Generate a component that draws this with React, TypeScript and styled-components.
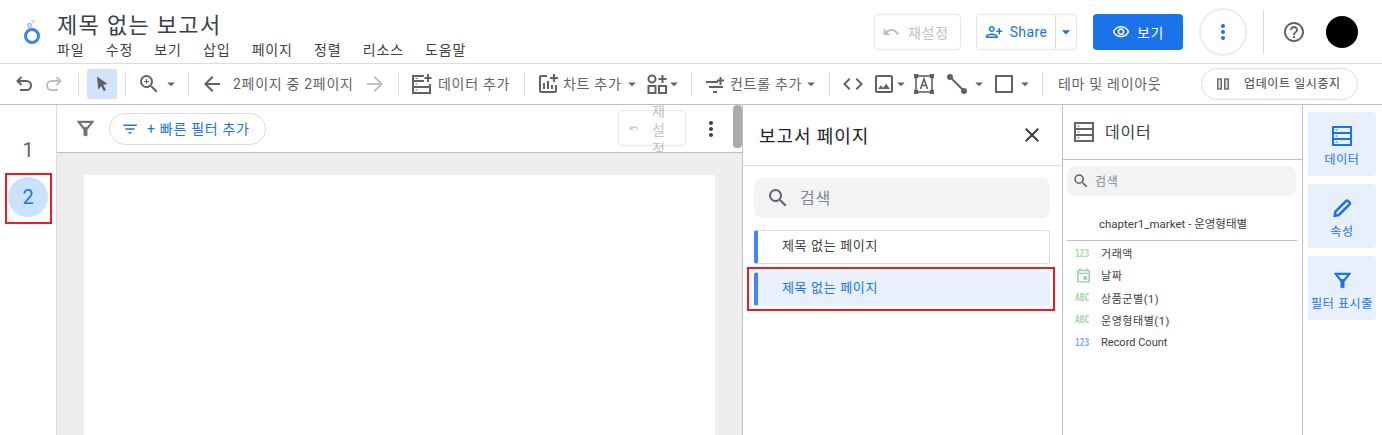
import styled, { createGlobalStyle } from "styled-components";
import {
  MdUndo,
  MdOutlineZoomIn,
  MdArrowBack,
  MdArrowForward,
  MdCode,
  MdOutlineImage,
  MdHelpOutline,
  MdMoreVert,
  MdOutlineVisibility,
  MdPersonAddAlt,
  MdArrowDropDown,
  MdClose,
  MdSearch,
  MdFilterList,
  MdOutlineAddchart,
  MdOutlineEvent,
} from "react-icons/md";

const GlobalStyle = createGlobalStyle`
  html, body {
    margin: 0;
    padding: 0;
    background: #fff;
    font-family: Roboto, "Noto Sans CJK KR", sans-serif;
    color: #3c4043;
  }
  * { box-sizing: border-box; }
  svg { flex: none; }
`;

const Page = styled.div`
  width: 1382px;
  height: 435px;
  overflow: hidden;
  position: relative;
  display: flex;
  flex-direction: column;
`;

/* top header */
const Header = styled.header`
  height: 64px;
  flex: none;
  display: flex;
  border-bottom: 1px solid #dadce0;
  padding-left: 21px;
`;

const LogoBox = styled.div`
  width: 36px;
  padding-top: 17px;
`;

const TitleBlock = styled.div`
  padding-top: 11px;
`;

const Title = styled.div`
  font-size: 22px;
  line-height: 29px;
  letter-spacing: 0.06em;
  color: #3c4043;
`;

const MenuBar = styled.nav`
  display: flex;
  gap: 21.2px;
  font-size: 14px;
  letter-spacing: 0.85px;
  line-height: 20px;
  color: #3c4043;
`;

const HeaderRight = styled.div`
  margin-left: auto;
  display: flex;
  align-items: center;
  padding: 0 24px 0 0;
  height: 63px;
`;

const OutlineButton = styled.div<{ $w: number; $muted?: boolean; $gap: number }>`
  width: ${(p) => p.$w}px;
  height: 36px;
  display: flex;
  align-items: center;
  border: 1px solid #e3e5e8;
  border-radius: 4px;
  font-size: 14px;
  color: ${(p) => (p.$muted ? "#bdc1c6" : "#1a73e8")};
  margin-right: ${(p) => p.$gap}px;
`;

const ResetInner = styled.div`
  display: flex;
  align-items: center;
  gap: 8px;
  padding-left: 7px;
  letter-spacing: 0.05em;
`;

const ShareMain = styled.div`
  width: 80px;
  height: 100%;
  display: flex;
  align-items: center;
  justify-content: center;
  gap: 7px;
  letter-spacing: 0.4px;
  border-right: 1px solid #dadce0;
`;

const ShareCaret = styled.div`
  flex: 1;
  display: flex;
  justify-content: center;
`;

const ViewButton = styled.div`
  width: 90px;
  height: 36px;
  background: #1a73e8;
  border-radius: 4px;
  color: #fff;
  display: flex;
  align-items: center;
  justify-content: center;
  gap: 7px;
  font-size: 14px;
  letter-spacing: 0.05em;
  margin-right: 16px;
`;

const RoundMore = styled.div`
  width: 48px;
  height: 48px;
  border: 2px solid #eceded;
  border-radius: 50%;
  color: #1a73e8;
  display: flex;
  align-items: center;
  justify-content: center;
  margin-right: 16px;
`;

const HeaderRule = styled.div`
  width: 1px;
  height: 44px;
  background: #dadce0;
  margin-right: 18px;
`;

const Avatar = styled.div`
  width: 32px;
  height: 32px;
  border-radius: 50%;
  background: #000;
  margin-left: 20px;
`;

/* toolbar */
const Toolbar = styled.div`
  height: 41px;
  flex: none;
  display: flex;
  align-items: center;
  padding-left: 9px;
  border-bottom: 1px solid #bdc1c6;
  color: #5f6368;
  font-size: 14px;
`;

const Tool = styled.div<{ $w?: number; $ml?: number; $active?: boolean; $dim?: boolean }>`
  width: ${(p) => p.$w ?? 30}px;
  height: 30px;
  flex: none;
  margin-left: ${(p) => p.$ml ?? 0}px;
  display: flex;
  align-items: center;
  justify-content: center;
  border-radius: 2px;
  background: ${(p) => (p.$active ? "#d2e3fc" : "transparent")};
  color: ${(p) => (p.$dim ? "#bdc1c6" : "#5f6368")};
`;

const Caret = styled.div<{ $w?: number }>`
  width: ${(p) => p.$w ?? 14}px;
  height: 30px;
  flex: none;
  display: flex;
  align-items: center;
  justify-content: center;
  color: #5f6368;
`;

const Rule = styled.div<{ $l?: number; $r?: number }>`
  width: 1px;
  height: 24px;
  flex: none;
  background: #dadce0;
  margin: 0 ${(p) => p.$r ?? 8}px 0 ${(p) => p.$l ?? 8}px;
`;

const ToolLabel = styled.span<{ $w: number; $pl?: number }>`
  width: ${(p) => p.$w}px;
  flex: none;
  white-space: nowrap;
  color: #5f6368;
  font-size: 14px;
  letter-spacing: 0.05em;
  padding: 0 0 3px ${(p) => p.$pl ?? 0}px;
`;

const PauseButton = styled.div`
  width: 157px;
  height: 32px;
  flex: none;
  margin-left: 40px;
  border: 1px solid #dadce0;
  border-radius: 16px;
  display: flex;
  align-items: center;
  gap: 15px;
  padding-left: 15px;
  font-size: 12px;
  color: #3c4043;
`;

const PauseLabel = styled.span`
  letter-spacing: 0.05em;
  padding-bottom: 3px;
`;

/* main area */
const Main = styled.div`
  flex: 1;
  min-height: 0;
  display: flex;
`;

const Rail = styled.div`
  width: 57px;
  flex: none;
  border-right: 1px solid #dadce0;
  display: flex;
  flex-direction: column;
  align-items: center;
  padding: 25px 0 0 0;
  gap: 7px;
`;

const RailNum = styled.div<{ $active?: boolean }>`
  width: 40px;
  height: 40px;
  border-radius: 50%;
  display: flex;
  align-items: center;
  justify-content: center;
  font-size: 20px;
  background: ${(p) => (p.$active ? "#cbe2fc" : "transparent")};
  color: ${(p) => (p.$active ? "#1a73e8" : "#5f6368")};
`;

const Canvas = styled.div`
  width: 685px;
  flex: none;
  display: flex;
  flex-direction: column;
  position: relative;
  background: #eeeeee;
`;

const FilterBar = styled.div`
  height: 48px;
  flex: none;
  background: #fff;
  border-bottom: 1px solid #bdc1c6;
  display: flex;
  align-items: center;
  padding-left: 20px;
  overflow: hidden;
  color: #6f7276;
`;

const QuickFilter = styled.div`
  width: 157px;
  height: 32px;
  margin-left: 15px;
  border: 1px solid #dadce0;
  border-radius: 16px;
  display: flex;
  align-items: center;
  gap: 8px;
  padding-left: 11px;
  color: #1a73e8;
  font-size: 14px;
  letter-spacing: 0.05em;
`;

const QuickLabel = styled.span`
  padding-bottom: 2px;
`;

const SmallReset = styled.div`
  width: 68px;
  height: 36px;
  margin-left: 352px;
  margin-top: -1px;
  border: 1px solid #e3e5e8;
  border-radius: 4px;
  position: relative;
  display: flex;
  align-items: center;
  padding-left: 10px;
  color: #bdc1c6;
`;

const SmallResetText = styled.span`
  position: absolute;
  left: 33px;
  top: -9px;
  width: 14px;
  font-size: 14px;
  line-height: 19px;
  color: #bdc1c6;
  word-break: break-all;
`;

const FilterMore = styled.div`
  margin-left: 13px;
  display: flex;
  color: #3c4043;
`;

const Scrollbar = styled.div`
  position: absolute;
  top: 0;
  right: 0;
  width: 9px;
  height: 43px;
  background: #ababab;
  border-radius: 4px;
`;

const CanvasBody = styled.div`
  flex: 1;
  padding: 22px 27px 0 27px;
`;

const Sheet = styled.div`
  width: 631px;
  height: 100%;
  background: #fff;
`;

const PagesPanel = styled.div`
  width: 321px;
  flex: none;
  border-left: 1px solid #bdc1c6;
  border-right: 1px solid #bdc1c6;
  display: flex;
  flex-direction: column;
`;

const PagesHead = styled.div`
  height: 61px;
  flex: none;
  border-bottom: 1px solid #dadce0;
  display: flex;
  align-items: center;
  justify-content: space-between;
  padding: 0 18px 0 16px;
  font-size: 18px;
  letter-spacing: 0.05em;
  color: #202124;
`;

const PagesBody = styled.div`
  padding: 12px 12px 12px 11px;
  display: flex;
  flex-direction: column;
`;

const SearchBox = styled.div<{ $small?: boolean }>`
  height: ${(p) => (p.$small ? 30 : 40)}px;
  margin-right: ${(p) => (p.$small ? 1 : 0)}px;
  background: #f1f3f4;
  border-radius: 8px;
  display: flex;
  align-items: center;
  gap: ${(p) => (p.$small ? 5 : 10)}px;
  padding-left: ${(p) => (p.$small ? 5 : 12)}px;
  font-size: ${(p) => (p.$small ? 12 : 16)}px;
  letter-spacing: 0.05em;
  color: #80868b;
  flex: none;
`;

const SearchHint = styled.span`
  padding-bottom: 2px;
`;

const PageItem = styled.div<{ $active?: boolean }>`
  height: 34px;
  margin-top: ${(p) => (p.$active ? 8 : 12)}px;
  border: 1px solid ${(p) => (p.$active ? "#e8f0fe" : "#dadce0")};
  border-left: 4px solid #4285f4;
  border-radius: 3px;
  background: ${(p) => (p.$active ? "#e8f0fe" : "#fff")};
  color: ${(p) => (p.$active ? "#1a73e8" : "#3c4043")};
  display: flex;
  align-items: center;
  padding: 0 0 5px 24px;
  font-size: 13px;
  letter-spacing: 0.05em;
`;

const DataPanel = styled.div`
  width: 240px;
  flex: none;
  border-right: 1px solid #bdc1c6;
  display: flex;
  flex-direction: column;
`;

const DataHead = styled.div`
  height: 55px;
  flex: none;
  border-bottom: 1px solid #bdc1c6;
  display: flex;
  align-items: center;
  gap: 11px;
  padding-left: 11px;
  font-size: 16px;
  letter-spacing: 0.05em;
  color: #3c4043;
`;

const DataTitle = styled.span`
  padding-bottom: 2px;
`;

const DataBody = styled.div`
  padding: 6px 5px 0 4px;
`;

const SourceName = styled.div`
  height: 45px;
  padding: 19px 0 0 32px;
  border-bottom: 1px solid #bdc1c6;
  font-size: 11.5px;
  line-height: 18px;
  color: #3c4043;
`;

const FieldList = styled.div`
  padding: 1px 0 0 8px;
`;

const FieldRow = styled.div`
  height: 22.25px;
  display: flex;
  align-items: center;
  font-size: 11px;
  color: #3c4043;
`;

const FieldSlot = styled.span`
  width: 26px;
  flex: none;
  display: flex;
  color: #93cf9e;
`;

const FieldName = styled.span<{ $latin?: boolean }>`
  letter-spacing: ${(p) => (p.$latin ? "0" : "0.05em")};
`;

const TypeMark = styled.span<{ $blue?: boolean }>`
  display: inline-block;
  font-family: "DejaVu Sans Mono", monospace;
  font-size: 11px;
  line-height: 11px;
  font-weight: 700;
  transform: scaleX(0.72);
  transform-origin: left center;
  color: ${(p) => (p.$blue ? "#7baaf7" : "#a8d5a9")};
`;

const SideTabs = styled.div`
  flex: 1;
  padding: 7px 6px 0 5px;
  display: flex;
  flex-direction: column;
  gap: 8px;
`;

const SideTab = styled.div`
  height: 64px;
  padding-top: 14px;
  background: #e8f0fe;
  border-radius: 4px;
  display: flex;
  flex-direction: column;
  align-items: center;
  gap: 4px;
  color: #1a73e8;
  font-size: 12px;
  letter-spacing: 0.05em;
  white-space: nowrap;
`;

const TabIcon = styled.div`
  height: 20px;
  display: flex;
  align-items: center;
  justify-content: center;
`;

const Annotation = styled.div<{ $x: number; $y: number; $w: number; $h: number }>`
  position: absolute;
  left: ${(p) => p.$x}px;
  top: ${(p) => p.$y}px;
  width: ${(p) => p.$w}px;
  height: ${(p) => p.$h}px;
  border: 2px solid #ed1c24;
`;

function LogoIcon() {
  return (
    <svg width="20" height="28" viewBox="0 0 20 28" fill="none">
      <circle cx="11" cy="19" r="6.500" stroke="#3d84ec" strokeWidth="3" />
      <circle cx="8.500" cy="8.500" r="1.800" stroke="#7fb0f5" strokeWidth="1.200" />
      <circle cx="12" cy="4.500" r="1.200" stroke="#a6c8f8" strokeWidth="1" />
    </svg>
  );
}

function HookArrow({ flip }: { flip?: boolean }) {
  return (
    <svg width="18" height="16" viewBox="0 0 18 16" fill="none" stroke="currentColor" strokeWidth="2">
      <g transform={flip ? "translate(18 0) scale(-1 1)" : undefined}>
        <path d="M6.500 1L2.500 5l4 4" />
        <path d="M2.500 5h9a4.500 4.500 0 0 1 0 9H5" />
      </g>
    </svg>
  );
}

function DataIcon({ color = "currentColor" }: { color?: string }) {
  return (
    <svg width="20" height="20" viewBox="0 0 20 20" fill="none" stroke={color} strokeWidth="2">
      <rect x="1" y="1" width="18" height="18" />
      <path d="M1 7h18M1 13h18" />
      <path d="M3.500 4h2M3.500 10h2M3.500 16h2" strokeWidth="1.200" />
    </svg>
  );
}

function AddDataIcon() {
  return (
    <svg width="20" height="20" viewBox="0 0 20 20" fill="none" stroke="currentColor" strokeWidth="2">
      <path d="M12 2H1v17h17v-9" />
      <path d="M1 7h11M1 13h17" />
      <path d="M3.500 4.500h2M3.500 10h2M3.500 16h2" strokeWidth="1.200" />
      <path d="M16 0v8M12.500 4h7" />
    </svg>
  );
}

function ShapesIcon() {
  return (
    <svg width="20" height="20" viewBox="0 0 20 20" fill="none" stroke="currentColor" strokeWidth="2">
      <circle cx="5" cy="5" r="3.500" />
      <rect x="1.500" y="12" width="7" height="7" />
      <rect x="12" y="12" width="7" height="7" />
      <path d="M15.500 1v8M11.500 5h8" />
    </svg>
  );
}

function ControlIcon() {
  return (
    <svg width="20" height="20" viewBox="0 0 20 20" fill="none" stroke="currentColor" strokeWidth="2">
      <path d="M1 8h12M4 13h14M8 18h4" />
      <path d="M15.500 3v8M12 6.500h7" />
    </svg>
  );
}

function TextBoxIcon() {
  return (
    <svg width="20" height="20" viewBox="0 0 20 20" fill="none" stroke="currentColor" strokeWidth="1.600">
      <rect x="2" y="2" width="16" height="16" />
      <path d="M6.500 15L10 5l3.500 10M7.800 11.500h4.400" />
      <path d="M0.500 0.500h3v3h-3zM16.500 0.500h3v3h-3zM0.500 16.500h3v3h-3zM16.500 16.500h3v3h-3z" fill="currentColor" />
    </svg>
  );
}

function LineIcon() {
  return (
    <svg width="20" height="20" viewBox="0 0 20 20" fill="none" stroke="currentColor" strokeWidth="2">
      <path d="M3 3l14 14" />
      <circle cx="3" cy="3" r="2" fill="currentColor" />
      <circle cx="17" cy="17" r="2" fill="currentColor" />
    </svg>
  );
}

function SquareIcon() {
  return (
    <svg width="20" height="20" viewBox="0 0 20 20" fill="none" stroke="currentColor" strokeWidth="2">
      <rect x="2" y="2" width="16" height="16" />
    </svg>
  );
}

function PointerIcon() {
  return (
    <svg width="14" height="16" viewBox="0 0 14 16" fill="currentColor">
      <path d="M2 0.500l10.500 7.500-4.200 1 2.700 5-2.200 1.200-2.600-5-3 3.300z" />
    </svg>
  );
}

function PauseIcon() {
  return (
    <svg width="12" height="12" viewBox="0 0 12 12" fill="#dadce0" stroke="#5f6368" strokeWidth="1.300">
      <rect x="0.700" y="1" width="3.600" height="10" />
      <rect x="7.700" y="1" width="3.600" height="10" />
    </svg>
  );
}

function FunnelIcon() {
  return (
    <svg width="17" height="17" viewBox="0 0 20 20" fill="none" stroke="currentColor" strokeWidth="2.600">
      <path d="M2 2.200h16l-6 7.600H8z" />
      <path d="M8 9h4v9.500H8z" fill="currentColor" strokeWidth="0.600" />
    </svg>
  );
}

function PencilIcon() {
  return (
    <svg width="20" height="20" viewBox="0 0 22 22" fill="none" stroke="currentColor" strokeWidth="2.800">
      <path d="M3 19.500l0.800-4.500L15.500 3.300a1.500 1.500 0 0 1 2.100 0l1.600 1.600a1.500 1.500 0 0 1 0 2.100L7.500 18.700z" />
    </svg>
  );
}

const menus = ["파일", "수정", "보기", "삽입", "페이지", "정렬", "리소스", "도움말"];

export default function App() {
  return (
    <Page>
      <GlobalStyle />
      <Header>
        <LogoBox>
          <LogoIcon />
        </LogoBox>
        <TitleBlock>
          <Title>제목 없는 보고서</Title>
          <MenuBar>
            {menus.map((m) => (
              <span key={m}>{m}</span>
            ))}
          </MenuBar>
        </TitleBlock>
        <HeaderRight>
          <OutlineButton $w={87} $gap={15} $muted>
            <ResetInner>
              <MdUndo size={18} />
              재설정
            </ResetInner>
          </OutlineButton>
          <OutlineButton $w={101} $gap={16}>
            <ShareMain>
              <MdPersonAddAlt size={18} />
              Share
            </ShareMain>
            <ShareCaret>
              <MdArrowDropDown size={20} />
            </ShareCaret>
          </OutlineButton>
          <ViewButton>
            <MdOutlineVisibility size={18} />
            보기
          </ViewButton>
          <RoundMore>
            <MdMoreVert size={24} />
          </RoundMore>
          <HeaderRule />
          <Tool $w={24}>
            <MdHelpOutline size={24} />
          </Tool>
          <Avatar />
        </HeaderRight>
      </Header>

      <Toolbar>
        <Tool>
          <HookArrow />
        </Tool>
        <Tool $dim>
          <HookArrow flip />
        </Tool>
        <Rule $l={9} />
        <Tool $active>
          <PointerIcon />
        </Tool>
        <Rule />
        <Tool>
          <MdOutlineZoomIn size={24} />
        </Tool>
        <Caret>
          <MdArrowDropDown size={18} />
        </Caret>
        <Rule $l={10} />
        <Tool>
          <MdArrowBack size={24} />
        </Tool>
        <ToolLabel $w={133} $pl={6}>
          2페이지 중 2페이지
        </ToolLabel>
        <Tool $dim>
          <MdArrowForward size={24} />
        </Tool>
        <Rule />
        <Tool>
          <AddDataIcon />
        </Tool>
        <ToolLabel $w={78} $pl={1}>
          데이터 추가
        </ToolLabel>
        <Rule $l={9} />
        <Tool>
          <MdOutlineAddchart size={24} />
        </Tool>
        <ToolLabel $w={62}>차트 추가</ToolLabel>
        <Caret>
          <MdArrowDropDown size={18} />
        </Caret>
        <Tool $w={26} $ml={5}>
          <ShapesIcon />
        </Tool>
        <Caret $w={8}>
          <MdArrowDropDown size={18} />
        </Caret>
        <Rule $l={13} />
        <Tool>
          <ControlIcon />
        </Tool>
        <ToolLabel $w={74}>컨트롤 추가</ToolLabel>
        <Caret>
          <MdArrowDropDown size={18} />
        </Caret>
        <Rule $l={11} />
        <Tool>
          <MdCode size={24} />
        </Tool>
        <Tool $ml={1}>
          <MdOutlineImage size={24} />
        </Tool>
        <Caret $w={4}>
          <MdArrowDropDown size={18} />
        </Caret>
        <Tool $w={28} $ml={7}>
          <TextBoxIcon />
        </Tool>
        <Tool $w={32} $ml={3}>
          <LineIcon />
        </Tool>
        <Caret $w={12}>
          <MdArrowDropDown size={18} />
        </Caret>
        <Tool $w={28} $ml={5}>
          <SquareIcon />
        </Tool>
        <Caret>
          <MdArrowDropDown size={18} />
        </Caret>
        <Rule $l={10} $r={15} />
        <ToolLabel $w={103}>테마 및 레이아웃</ToolLabel>
        <PauseButton>
          <PauseIcon />
          <PauseLabel>업데이트 일시중지</PauseLabel>
        </PauseButton>
      </Toolbar>

      <Main>
        <Rail>
          <RailNum>1</RailNum>
          <RailNum $active>2</RailNum>
        </Rail>
        <Canvas>
          <FilterBar>
            <FunnelIcon />
            <QuickFilter>
              <MdFilterList size={18} />
              <QuickLabel>+ 빠른 필터 추가</QuickLabel>
            </QuickFilter>
            <SmallReset>
              <MdUndo size={10} />
              <SmallResetText>재설정</SmallResetText>
            </SmallReset>
            <FilterMore>
              <MdMoreVert size={24} />
            </FilterMore>
          </FilterBar>
          <Scrollbar />
          <CanvasBody>
            <Sheet />
          </CanvasBody>
        </Canvas>
        <PagesPanel>
          <PagesHead>
            보고서 페이지
            <MdClose size={24} color="#3c4043" />
          </PagesHead>
          <PagesBody>
            <SearchBox>
              <MdSearch size={24} color="#5f6368" />
              <SearchHint>검색</SearchHint>
            </SearchBox>
            <PageItem>제목 없는 페이지</PageItem>
            <PageItem $active>제목 없는 페이지</PageItem>
          </PagesBody>
        </PagesPanel>
        <DataPanel>
          <DataHead>
            <DataIcon color="#5f6368" />
            <DataTitle>데이터</DataTitle>
          </DataHead>
          <DataBody>
            <SearchBox $small>
              <MdSearch size={18} color="#5f6368" />
              <SearchHint>검색</SearchHint>
            </SearchBox>
            <SourceName>chapter1_market - 운영형태별</SourceName>
            <FieldList>
              <FieldRow>
                <FieldSlot>
                  <TypeMark>123</TypeMark>
                </FieldSlot>
                <FieldName>거래액</FieldName>
              </FieldRow>
              <FieldRow>
                <FieldSlot>
                  <MdOutlineEvent size={17} />
                </FieldSlot>
                <FieldName>날짜</FieldName>
              </FieldRow>
              <FieldRow>
                <FieldSlot>
                  <TypeMark>ABC</TypeMark>
                </FieldSlot>
                <FieldName>상품군별(1)</FieldName>
              </FieldRow>
              <FieldRow>
                <FieldSlot>
                  <TypeMark>ABC</TypeMark>
                </FieldSlot>
                <FieldName>운영형태별(1)</FieldName>
              </FieldRow>
              <FieldRow>
                <FieldSlot>
                  <TypeMark $blue>123</TypeMark>
                </FieldSlot>
                <FieldName $latin>Record Count</FieldName>
              </FieldRow>
            </FieldList>
          </DataBody>
        </DataPanel>
        <SideTabs>
          <SideTab>
            <TabIcon>
              <DataIcon />
            </TabIcon>
            데이터
          </SideTab>
          <SideTab>
            <TabIcon>
              <PencilIcon />
            </TabIcon>
            속성
          </SideTab>
          <SideTab>
            <TabIcon>
              <FunnelIcon />
            </TabIcon>
            필터 표시줄
          </SideTab>
        </SideTabs>
      </Main>

      <Annotation $x={5} $y={173} $w={47} $h={51} />
      <Annotation $x={747} $y={267} $w={308} $h={44} />
    </Page>
  );
}
